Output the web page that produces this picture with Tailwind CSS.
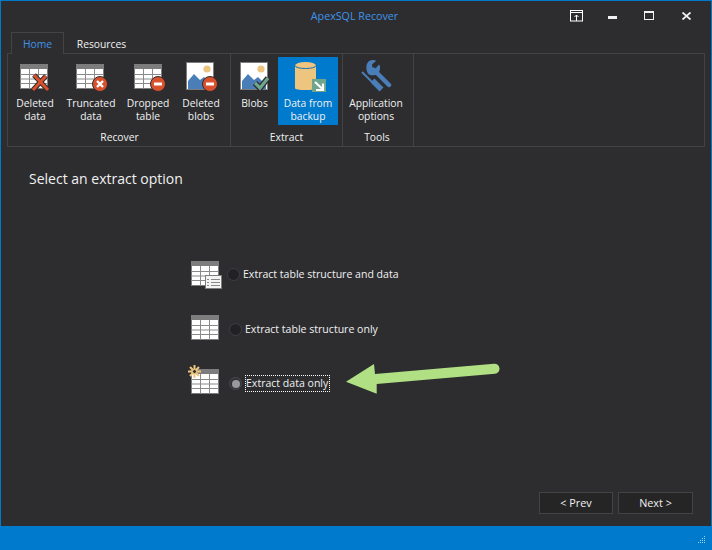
<!DOCTYPE html>
<html><head><meta charset="utf-8">
<script src="https://cdn.jsdelivr.net/npm/@tailwindcss/browser@4"></script>
</head>
<body class="m-0 bg-[#2d2d30]">
<svg width="0" height="0" class="absolute">
<defs>
<symbol id="tbl" viewBox="0 0 28 25">
<rect width="28" height="25" fill="#7d7d7d"/>
<rect x="1" y="5" width="26" height="19" fill="#fff"/>
<path d="M0 10.500h28M0 15h28M0 19.500h28M9.500 5v20M18.500 5v20" stroke="#8a8a8a" stroke-width="1"/>
</symbol>
<symbol id="pic" viewBox="0 0 28 28">
<rect x=".5" y=".5" width="27" height="27" fill="#fff" stroke="#7d7d7d"/>
<circle cx="21" cy="7" r="3.600" fill="#edc57f"/>
<path d="M2 27v-8l6-7 6 6 4-3 8 8v4z" fill="#4a7eb8"/>
</symbol>
</defs>
</svg>
<div class="relative w-[712px] h-[550px] flex flex-col overflow-hidden border-x border-t border-[#007acc] bg-[#2d2d30] text-[#f1f1f1] text-[10.300px] leading-[13px]" style="font-family:'Open Sans','Noto Sans',sans-serif">

<!-- title bar -->
<div class="relative h-[31px] shrink-0 flex items-center justify-center">
  <span class="text-[#3f94e9] text-[10.700px] ml-[-3px]">ApexSQL Recover</span>
  <svg class="absolute right-[128px] top-[9px]" width="13" height="12" viewBox="0 0 13 12" fill="none" stroke="#fff"><rect x=".5" y=".5" width="12" height="10.500"/><path d="M0 2.500h13M6.500 5v6M4.500 7l2-2 2 2"/></svg>
  <div class="absolute right-[94px] top-[15px] w-[9px] h-[3px] bg-[#f1f1f1]"></div>
  <div class="absolute right-[57px] top-[10px] w-[10px] h-[9px] border border-[#f1f1f1] border-t-2"></div>
  <svg class="absolute right-[20px] top-[11px]" width="9" height="8" viewBox="0 0 9 8" stroke="#f1f1f1" stroke-width="1.800"><path d="M.5.500l8 7M8.500.500l-8 7"/></svg>
</div>

<!-- tabs -->
<div class="h-[21px] shrink-0 flex pl-[10px] relative z-10">
  <div class="w-[53px] h-[22px] pt-[2px] border border-b-0 border-[#434346] bg-[#2d2d30] text-[#3f94e9] flex items-center justify-center text-[10.300px]">Home</div>
  <div class="w-[75px] h-[21px] pt-[4px] flex items-center justify-center text-[10.300px]">Resources</div>
</div>

<!-- ribbon -->
<div class="mx-[6px] h-[94px] shrink-0 border border-[#434346] flex">
  <!-- Recover -->
  <div class="w-[223px] border-r border-[#434346] flex flex-col">
    <div class="h-[72px] pt-[3px] flex text-center">
      <div class="w-[54px] flex flex-col items-center">
        <div class="h-[40px] pt-[7px]"><svg width="30" height="28" viewBox="0 0 30 28"><use href="#tbl" width="28" height="25"/><path d="M14 11l14 15M26 12L13 26" stroke="#2d2d30" stroke-width="5" fill="none"/><path d="M14 11l14 15M26 12L13 26" stroke="#d9512c" stroke-width="3" fill="none"/></svg></div>
        <span>Deleted<br>data</span>
      </div>
      <div class="w-[58px] flex flex-col items-center">
        <div class="h-[40px] pt-[7px] pl-[2px]"><svg width="32" height="28" viewBox="0 0 32 28"><use href="#tbl" width="28" height="25"/><circle cx="24" cy="20" r="7.500" fill="#d9512c" stroke="#2d2d30"/><path d="M21 17l6 6M27 17l-6 6" stroke="#fff" stroke-width="2.400"/></svg></div>
        <span>Truncated<br>data</span>
      </div>
      <div class="w-[56px] flex flex-col items-center">
        <div class="h-[40px] pt-[7px] pl-[3px]"><svg width="32" height="28" viewBox="0 0 32 28"><use href="#tbl" width="28" height="25"/><circle cx="24" cy="20" r="7.500" fill="#d9512c" stroke="#2d2d30"/><rect x="20" y="18.500" width="8" height="3" fill="#fff"/></svg></div>
        <span>Dropped<br>table</span>
      </div>
      <div class="w-[50px] flex flex-col items-center">
        <div class="h-[40px] pt-[5px] pl-[2px]"><svg width="32" height="30" viewBox="0 0 32 30"><use href="#pic" width="28" height="28"/><circle cx="24" cy="22" r="7.500" fill="#d9512c" stroke="#2d2d30"/><rect x="20" y="20.500" width="8" height="3" fill="#fff"/></svg></div>
        <span>Deleted<br>blobs</span>
      </div>
    </div>
    <div class="flex-1 text-center pl-[1px] pt-[4px] leading-[15px]">Recover</div>
  </div>
  <!-- Extract -->
  <div class="w-[112px] border-r border-[#434346] flex flex-col">
    <div class="h-[72px] pt-[3px] flex text-center pl-[2px]">
      <div class="w-[45px] pr-[2px] flex flex-col items-center">
        <div class="h-[40px] pt-[5px] pl-[2px]"><svg width="32" height="30" viewBox="0 0 32 30"><use href="#pic" width="28" height="28"/><path d="M15 21l5 5 8-10" stroke="#2d2d30" stroke-width="6" fill="none"/><path d="M15 21l5 5 8-10" stroke="#6fa58a" stroke-width="3.200" fill="none"/></svg></div>
        <span>Blobs</span>
      </div>
      <div class="w-[60px] h-[68px] bg-[#007acc] flex flex-col items-center">
        <div class="h-[40px] pt-[5px]"><svg width="36" height="30" viewBox="0 0 36 30"><path d="M5 4v22c0 1.500 4 2 10.500 2s10.500-.5 10.500-2V4z" fill="#edc57f"/><ellipse cx="15.500" cy="3.500" rx="10.500" ry="3.500" fill="#edc57f"/><path d="M5 3.500c0 4 21 4 21 0" stroke="#0d72b8" fill="none"/><rect x="22" y="17" width="14" height="13" fill="#6fa58a"/><path d="M25 20l8 7.500M33 21.500v6.500h-7" stroke="#fff" stroke-width="2.200" fill="none"/></svg></div>
        <span>Data from<br>backup</span>
      </div>
    </div>
    <div class="flex-1 text-center pt-[4px] leading-[15px]">Extract</div>
  </div>
  <!-- Tools -->
  <div class="w-[71px] border-r border-[#434346] flex flex-col">
    <div class="h-[72px] pt-[3px] flex text-center">
      <div class="w-[66px] flex flex-col items-center">
        <div class="h-[40px] pt-[3px]"><svg width="32" height="33" viewBox="0 0 32 33" fill="none" stroke="#4a7eb8"><path d="M14 10L29 25" stroke-width="4.500" stroke-linecap="round"/><path d="M2 12l10 10" stroke-width="2"/><path d="M12.500 20.500l9 9" stroke-width="5.500"/><path d="M8 0c3-1.500 6-1 7 0l-4 3.500.5 3 3 1 3.500-4c1.500 1 1.500 6-.5 8.500s-7 3-9.500 1.500S3.500 4 8 0z" fill="#4a7eb8" stroke="none" transform="translate(1 1)"/></svg></div>
        <span>Application<br>options</span>
      </div>
    </div>
    <div class="flex-1 text-center pt-[4px] leading-[15px] pr-[2px]">Tools</div>
  </div>
</div>

<!-- main -->
<div class="flex-1 flex flex-col relative text-[10.550px]">
  <div class="pl-[28px] pt-[23px] text-[14px] leading-[18px]">Select an extract option</div>

  <div class="mt-[73px] pl-[190px] flex flex-col">
    <div class="h-[54px] flex items-start">
      <div class="w-[33px] h-[31px] relative shrink-0">
        <svg width="28" height="25" class="absolute left-0 top-0"><use href="#tbl" width="28" height="25"/></svg>
        <div class="absolute left-[14px] top-[14px] w-[17px] h-[14px] bg-[#f4f4f4] border border-[#7d7d7d]"></div>
        <svg class="absolute left-[16px] top-[17px]" width="13" height="9" stroke="#888"><path d="M0 1.500h2M4 1.500h9M0 4.500h2M4 4.500h9M0 7.500h2M4 7.500h9"/></svg>
      </div>
      <div class="w-[13px] h-[13px] rounded-full border border-[#3f3f46] bg-[#222225] mt-[7px] ml-[3px] shrink-0"></div>
      <span class="ml-[3px] mt-[7px] whitespace-nowrap">Extract table structure and data</span>
    </div>
    <div class="h-[54px] flex items-start">
      <svg width="28" height="25" class="shrink-0"><use href="#tbl" width="28" height="25"/></svg>
      <div class="w-[13px] h-[13px] rounded-full border border-[#3f3f46] bg-[#222225] mt-[8px] ml-[10px] shrink-0"></div>
      <span class="ml-[3px] mt-[8px] whitespace-nowrap">Extract table structure only</span>
    </div>
    <div class="h-[35px] flex items-start">
      <div class="relative w-[28px] h-[25px] shrink-0">
        <svg width="28" height="25"><use href="#tbl" width="28" height="25"/></svg>
        <svg class="absolute left-[-3px] top-[-4px]" width="13" height="13" viewBox="0 0 13 13" stroke="#edc57f" stroke-width="2" fill="none"><path d="M6.500 0v13M0 6.500h13M2 2l9 9M11 2l-9 9"/><circle cx="6.500" cy="6.500" r="2" fill="#2d2d30" stroke-width="1"/></svg>
      </div>
      <div class="w-[13px] h-[13px] rounded-full border border-[#4a4a50] bg-[#333337] mt-[8px] ml-[10px] shrink-0 flex items-center justify-center"><div class="w-[8px] h-[8px] rounded-full bg-[#9a9a9c]"></div></div>
      <span class="ml-[3px] mt-[6px] h-[17px] pr-[1px] leading-[15px] border border-dotted border-white whitespace-nowrap">Extract data only</span>
    </div>
  </div>

  <svg class="absolute left-[339px] top-[213px]" width="165" height="40" viewBox="0 0 165 40" fill="#b0df84"><path d="M6 21.700L34 4l1 10 119-10.300a5 5 0 0 1 1 10L36.700 24l0 9.700z"/></svg>

  <div class="absolute right-[18px] top-[345px] flex gap-[5px]">
    <div class="w-[74px] h-[22px] pb-[2px] bg-[#252526] border border-[#434346] flex items-center justify-center text-[10.800px]">&lt; Prev</div>
    <div class="w-[75px] h-[22px] pb-[2px] bg-[#252526] border border-[#434346] flex items-center justify-center text-[10.800px]">Next &gt;</div>
  </div>
</div>

<!-- status -->
<div class="h-[24px] shrink-0 bg-[#007acc] relative -mx-[1px]">
  <svg class="absolute right-[6px] bottom-[5px]" width="9" height="9" fill="#9fd0ee"><path d="M7 0h1v1H7zM5 2h1v1H5zM7 2h1v1H7zM3 4h1v1H3zM5 4h1v1H5zM7 4h1v1H7zM1 6h1v1H1zM3 6h1v1H3zM5 6h1v1H5zM7 6h1v1H7z"/></svg>
</div>
</div>
</body></html>
